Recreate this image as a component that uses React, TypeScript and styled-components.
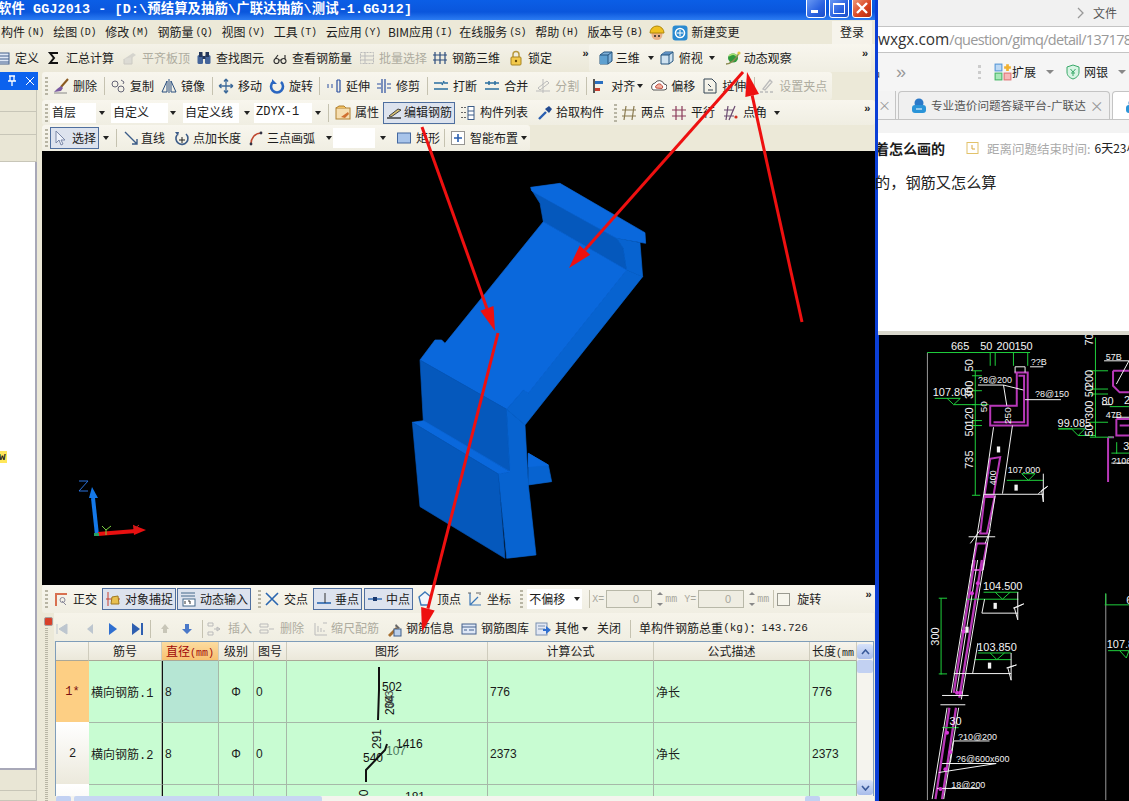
import React from "react";
import styled, { createGlobalStyle } from "styled-components";

const Global = createGlobalStyle`
  html, body { margin: 0; padding: 0; background: #000; overflow: hidden; }
  #root { width: 1129px; height: 801px; overflow: hidden; }
`;

const CJK = `"Noto Sans CJK SC", "Liberation Sans", sans-serif`;
const MONO = `"Liberation Mono", "Noto Sans CJK SC", monospace`;

const Page = styled.div`
  position: relative;
  display: flex;
  width: 1129px;
  height: 801px;
  overflow: hidden;
  font: 12px/1.2 ${CJK};
  color: #1c1c1c;
`;
const AppWindow = styled.div`
  width: 878px;
  flex: none;
  display: flex;
  flex-direction: column;
  background: #ece9d8;
  border-right: 3px solid #0b3fd6;
  box-sizing: border-box;
  overflow: hidden;
`;
const TitleBar = styled.div`
  height: 20px;
  flex: none;
  display: flex;
  align-items: center;
  justify-content: space-between;
  padding: 0 3px 0 0;
  background: linear-gradient(#0b5ee6, #0a56dc 60%, #2c7cf2);
`;
const TitleText = styled.div`
  margin-left: -2px;
  font: bold 13.33px/20px ${MONO};
  letter-spacing: 0.15px;
  color: #fff;
  white-space: pre;
`;
const WinButtons = styled.div`
  display: flex;
  gap: 3px;
  margin-top: -5px;
`;
const WinButton = styled.div<{ $close?: boolean }>`
  width: 20px;
  height: 21px;
  box-sizing: border-box;
  border: 1px solid #fff;
  border-radius: 3px;
  display: flex;
  align-items: center;
  justify-content: center;
  background: ${(p) => (p.$close ? "linear-gradient(135deg,#f0a080,#d8421e 60%,#b02a10)" : "linear-gradient(135deg,#6f9ef5,#2a62e0 60%,#1c4ec8)")};
`;
const MenuBar = styled.div`
  height: 24px;
  flex: none;
  display: flex;
  align-items: center;
  padding-top: 1px;
  box-sizing: border-box;
  background: #ece9d8;
`;
const MenuItem = styled.span<{ $ml: number }>`
  margin-left: ${(p) => p.$ml}px;
  white-space: nowrap;
  display: inline-flex;
  align-items: center;
`;
const Key = styled.span`
  font: 10px ${MONO};
  margin-left: 2px;
  letter-spacing: -0.3px;
`;
const LoginBox = styled.div`
  margin-left: auto;
  margin-right: 3px;
  width: 40px;
  height: 24px;
  background: #f6f4ec;
  display: flex;
  align-items: center;
  justify-content: center;
`;
const RowOne = styled.div`
  height: 28px;
  flex: none;
  display: flex;
  align-items: center;
  background: linear-gradient(#f4f2e8, #ebe8d8);
`;
const Body = styled.div`
  flex: 1;
  min-height: 0;
  display: flex;
`;
const SidePanel = styled.div`
  width: 42px;
  flex: none;
  display: flex;
  flex-direction: column;
  background: #ece9d8;
`;
const SideHeader = styled.div`
  width: 38px;
  height: 18px;
  flex: none;
  background: #0c62ee;
  display: flex;
  align-items: center;
  justify-content: flex-end;
  gap: 8px;
  padding-right: 3px;
  box-sizing: border-box;
`;
const SideRow = styled.div<{ $h: number }>`
  width: 37px;
  height: ${(p) => p.$h}px;
  flex: none;
  box-sizing: border-box;
  background: #e9e6d5;
  border: 1px solid #c8c6b8;
  border-width: 0 1px 1px 0;
`;
const SideList = styled.div`
  width: 37px;
  flex: 1;
  box-sizing: border-box;
  background: #fff;
  border-right: 2px solid #a8a8b8;
  border-bottom: 2px solid #a8a8b8;
  padding-top: 289px;
  overflow: hidden;
`;
const SideTag = styled.span`
  display: inline-block;
  background: #ffe75a;
  font: bold 11px/12px ${MONO};
  color: #222;
  margin-left: -1px;
  width: 8px;
  overflow: hidden;
`;
const MainColumn = styled.div`
  flex: 1;
  min-width: 0;
  display: flex;
  flex-direction: column;
`;
const ToolRow = styled.div<{ $h: number }>`
  height: ${(p) => p.$h}px;
  flex: none;
  display: flex;
  align-items: center;
  background: #ece9d8;
`;
const ToolGroup = styled.div<{ $w: number }>`
  width: ${(p) => p.$w}px;
  height: 100%;
  flex: none;
  display: flex;
  align-items: center;
  background: linear-gradient(#f8f6ee, #f0eee2);
  border-radius: 3px;
`;
const Grip = styled.i<{ $ml?: number; $h?: number }>`
  flex: none;
  margin-left: ${(p) => p.$ml ?? 3}px;
  width: 3px;
  height: ${(p) => p.$h ?? 18}px;
  background: repeating-linear-gradient(#b8b5a4 0 2px, transparent 2px 4px);
`;
const Sep = styled.i<{ $ml: number }>`
  flex: none;
  margin-left: ${(p) => p.$ml}px;
  width: 1px;
  height: 18px;
  background: #c5c2b0;
`;
const ToolItem = styled.span<{ $ml: number; $dim?: boolean; $active?: boolean; $gap?: number }>`
  flex: none;
  display: inline-flex;
  align-items: center;
  gap: ${(p) => p.$gap ?? 4}px;
  margin-left: ${(p) => p.$ml}px;
  white-space: nowrap;
  color: ${(p) => (p.$dim ? "#aeaca0" : "#1c1c1c")};
  ${(p) => (p.$active ? "height:22px;padding:0 2px;box-sizing:border-box;border:1px solid #4f6f9f;background:#dde3ee;" : "")}
`;
const Caret = styled.i<{ $ml: number }>`
  flex: none;
  position: relative;
  margin-left: ${(p) => p.$ml}px;
  width: 0;
  height: 0;
  border: 3px solid transparent;
  border-top: 4px solid #222;
  border-bottom: 0;
`;
const More = styled.span<{ $ml: number }>`
  flex: none;
  margin-left: ${(p) => p.$ml}px;
  font: bold 11px/10px ${MONO};
  color: #222;
  margin-top: -8px;
`;
const Combo = styled.span<{ $ml: number; $w: number; $mono?: boolean }>`
  flex: none;
  margin-left: ${(p) => p.$ml}px;
  width: ${(p) => p.$w}px;
  height: 20px;
  box-sizing: border-box;
  padding-left: 2px;
  background: #fff;
  display: inline-flex;
  align-items: center;
  white-space: nowrap;
  font-family: ${(p) => (p.$mono ? MONO : CJK)};
`;
const Viewport = styled.div`
  flex: 1;
  min-height: 0;
  background: #000;
`;
const FullSvg = styled.svg`
  display: block;
  width: 100%;
  height: 100%;
`;
const SmallLabel = styled.span<{ $ml: number; $c?: string }>`
  flex: none;
  margin-left: ${(p) => p.$ml}px;
  font: 10px ${MONO};
  color: ${(p) => p.$c ?? "#a8a79c"};
`;
const NumInput = styled.span<{ $ml: number }>`
  flex: none;
  margin-left: ${(p) => p.$ml}px;
  width: 46px;
  height: 18px;
  box-sizing: border-box;
  border: 1px solid #b8b8a8;
  background: #efede2;
  display: inline-flex;
  align-items: center;
  justify-content: flex-end;
  padding-right: 12px;
  font: 11px "Liberation Sans", sans-serif;
  color: #a8a79c;
`;
const Spin = styled.span`
  flex: none;
  margin-left: 4px;
  width: 7px;
  height: 14px;
  display: inline-flex;
  flex-direction: column;
  justify-content: space-between;
  align-items: center;
`;
const SpinUp = styled.i`
  border: 3px solid transparent;
  border-bottom: 3px solid #888;
  border-top: 0;
`;
const SpinDown = styled.i`
  border: 3px solid transparent;
  border-top: 3px solid #888;
  border-bottom: 0;
`;
const CheckBox = styled.span<{ $ml: number }>`
  flex: none;
  margin-left: ${(p) => p.$ml}px;
  width: 11px;
  height: 11px;
  border: 1px solid #9a9a90;
  background: #f6f5ec;
`;
const BottomPane = styled.div`
  flex: none;
  height: 188px;
  display: flex;
  background: #ece9d8;
`;
const PaneGrip = styled.div`
  width: 12px;
  flex: none;
  display: flex;
  flex-direction: column;
  align-items: center;
  padding-top: 3px;
  gap: 2px;
`;
const CloseDot = styled.span`
  width: 9px;
  height: 9px;
  margin-top: 1px;
  border-radius: 2px;
  background: #d8402a;
  border: 1px solid #a8a0a0;
  box-sizing: border-box;
`;
const GripLine = styled.i`
  flex: 1;
  width: 3px;
  margin-left: -4px;
  background: repeating-linear-gradient(#b8b5a4 0 1px, transparent 1px 2px);
`;
const PaneMain = styled.div`
  flex: 1;
  min-width: 0;
  display: flex;
  flex-direction: column;
  padding-right: 1px;
`;
const PaneBar = styled.div`
  height: 28px;
  flex: none;
  box-sizing: border-box;
  padding-top: 3px;
  display: flex;
  align-items: center;
  background: linear-gradient(#f6f4ea, #f0eee2);
`;
const WeightText = styled.span<{ $ml: number }>`
  flex: none;
  margin-left: ${(p) => p.$ml}px;
  white-space: nowrap;
  display: inline-flex;
  align-items: center;
`;
const WeightNum = styled.span`
  font: 11px ${MONO};
`;
const TableFrame = styled.div`
  flex: 1;
  min-height: 0;
  display: flex;
  border: 1px solid #7f9db9;
  border-bottom: 0;
  margin: 0 0 0 1px;
  background: #fff;
`;
const TableClip = styled.div`
  flex: 1;
  min-width: 0;
  overflow: hidden;
  background: #f8f7f0;
`;
const Grid = styled.table`
  table-layout: fixed;
  border-collapse: separate;
  border-spacing: 0;
  width: 801px;
`;
const Th = styled.th<{ $hot?: boolean }>`
  height: 19px;
  padding: 0;
  box-sizing: border-box;
  font-weight: 400;
  font-size: 12px;
  white-space: nowrap;
  overflow: hidden;
  color: ${(p) => (p.$hot ? "#a00808" : "#1c1c1c")};
  background: ${(p) => (p.$hot ? "linear-gradient(#fcdca0,#f8c070)" : "linear-gradient(#f6f4ec,#ebe8da)")};
  border-right: 1px solid #cfccbd;
  border-bottom: 1px solid #aaa898;
`;
const ThKey = styled.span`
  font: 10px ${MONO};
`;
const RowHead = styled.td<{ $hot?: boolean }>`
  height: 61px;
  padding: 0;
  box-sizing: border-box;
  text-align: center;
  font: 12px ${MONO};
  color: ${(p) => (p.$hot ? "#7a1010" : "#1c1c1c")};
  background: ${(p) => (p.$hot ? "#fdcf84" : "linear-gradient(#fff,#ece9dc)")};
  border-bottom: 1px solid #fff;
`;
const Td = styled.td<{ $center?: boolean; $sel?: boolean; $mono?: boolean; $rule?: boolean }>`
  height: 61px;
  padding: 0 2px;
  box-sizing: border-box;
  overflow: hidden;
  white-space: nowrap;
  text-align: ${(p) => (p.$center ? "center" : "left")};
  font: 12px ${(p) => (p.$mono ? MONO : `"Liberation Sans", "Noto Sans CJK SC", sans-serif`)};
  background: ${(p) => (p.$sel ? "#b6e6d4" : "#c8fcd2")};
  border-right: 1px solid #a6b8a8;
  border-bottom: 1px solid #a6b8a8;
  ${(p) => (p.$rule ? "border-left:1px solid #111;" : "")}
`;
const ShapeCell = styled.td`
  height: 61px;
  padding: 0;
  background: #c8fcd2;
  border-right: 1px solid #a6b8a8;
  border-bottom: 1px solid #a6b8a8;
  overflow: hidden;
`;
const ShapeSvg = styled.svg`
  display: block;
  width: 201px;
  height: 60px;
  overflow: visible;
`;
const VScroll = styled.div`
  width: 16px;
  flex: none;
  display: flex;
  flex-direction: column;
  background: #f5f4ee;
  padding: 2px 0 1px;
  box-sizing: border-box;
`;
const ScrollBtn = styled.div`
  height: 15px;
  flex: none;
  border-radius: 3px;
  background: linear-gradient(#d6e2fa, #a9bcea);
  display: flex;
  align-items: center;
  justify-content: center;
`;
const ScrollThumb = styled.div`
  height: 13px;
  flex: none;
  margin-top: 1px;
  border-radius: 2px;
  background: #c2d1f2;
`;
const ScrollFill = styled.div`
  flex: 1;
`;
const HScroll = styled.div`
  height: 5px;
  flex: none;
  display: flex;
  margin-left: 2px;
  background: #f5f4ee;
`;
const HBtn = styled.div<{ $ml?: number }>`
  width: 15px;
  flex: none;
  margin-left: ${(p) => p.$ml ?? 0}px;
  border-radius: 2px 2px 0 0;
  background: #c2d1f2;
`;
const HThumb = styled.div`
  width: 248px;
  flex: none;
  margin-left: 3px;
  background: #c8d6f2;
  border-radius: 2px 2px 0 0;
`;
const Browser = styled.div`
  flex: 1;
  min-width: 0;
  display: flex;
  flex-direction: column;
`;
const BrowserTop = styled.div`
  height: 26px;
  flex: none;
  box-sizing: border-box;
  background: #f1f1f1;
  display: flex;
  align-items: center;
  color: #555;
  padding-left: 199px;
  gap: 8px;
`;
const Address = styled.div`
  height: 27px;
  flex: none;
  box-sizing: border-box;
  background: #fff;
  border-top: 1px solid #c4c4c4;
  border-bottom: 1px solid #c4c4c4;
  font: 15.4px/25px "Open Sans", sans-serif;
  color: #999;
  white-space: nowrap;
  overflow: hidden;
`;
const AddressHost = styled.span`
  color: #333;
`;
const AddressPath = styled.span`
  font-size: 14.5px;
  letter-spacing: -0.7px;
`;
const Bookmarks = styled.div`
  height: 38px;
  flex: none;
  box-sizing: border-box;
  background: #f5f5f5;
  display: flex;
  align-items: center;
  overflow: hidden;
  color: #444;
`;
const BookText = styled.span<{ $ml?: number }>`
  flex: none;
  margin-left: ${(p) => p.$ml ?? 0}px;
  white-space: nowrap;
`;
const BookMore = styled.span<{ $ml: number }>`
  flex: none;
  width: 14px;
  margin-left: ${(p) => p.$ml}px;
  font: 18px/18px "Liberation Sans", sans-serif;
  color: #999;
`;
const BookDots = styled.i<{ $ml: number }>`
  flex: none;
  margin-left: ${(p) => p.$ml}px;
  width: 3px;
  height: 14px;
  background: repeating-linear-gradient(#ccc 0 3px, transparent 3px 6px);
`;
const TabCaret = styled.i<{ $ml: number }>`
  flex: none;
  margin-left: ${(p) => p.$ml}px;
  border: 4px solid transparent;
  border-top: 4px solid #888;
  border-bottom: 0;
`;
const Tabs = styled.div`
  height: 29px;
  flex: none;
  display: flex;
  gap: 2px;
  background: #f3f3f3;
  border-bottom: 1px solid #c4c4c4;
  box-sizing: border-box;
  overflow: hidden;
`;
const Tab = styled.div<{ $w: number; $on?: boolean }>`
  width: ${(p) => p.$w}px;
  flex: none;
  box-sizing: border-box;
  display: flex;
  align-items: center;
  gap: 4px;
  padding-left: 12px;
  color: #555;
  white-space: nowrap;
  overflow: hidden;
  background: ${(p) => (p.$on ? "#fff" : "#f0f0f0")};
  border: 1px solid #c4c4c4;
  border-bottom: 0;
  border-radius: 4px 4px 0 0;
`;
const TabEnd = styled.div`
  width: 18px;
  flex: none;
  box-sizing: border-box;
  display: flex;
  align-items: center;
  color: #999;
  border-right: 1px solid #c4c4c4;
  font-size: 13px;
`;
const TabLabel = styled.span`
  flex: none;
  font-size: 11.6px;
`;
const TabClose = styled.span`
  color: #999;
  font-size: 14px;
`;
const Strip = styled.div`
  height: 13px;
  flex: none;
  background: #f3f3f3;
`;
const Content = styled.div`
  flex: 1;
  min-height: 0;
  background: #fff;
  border-bottom: 4px solid #d9d7cc;
`;
const QuestionHead = styled.div`
  display: flex;
  align-items: center;
  height: 34px;
  padding-bottom: 4px;
  box-sizing: border-box;
  white-space: nowrap;
  overflow: hidden;
`;
const QuestionTitle = styled.b`
  flex: none;
  margin-left: -3px;
  font-size: 14px;
  width: 90px;
`;
const Countdown = styled.span`
  flex: none;
  margin-left: 6px;
  font-size: 12.5px;
  color: #aaa;
`;
const CountdownValue = styled.span`
  flex: none;
  margin-left: 4px;
  color: #222;
  font-size: 12px;
`;
const QuestionBody = styled.div`
  margin: -1px 0 0 -3px;
  font-size: 15.2px;
  line-height: 30px;
  white-space: nowrap;
  color: #222;
`;
const Drawing = styled.div`
  height: 466px;
  flex: none;
  background: #000;
  border-left: 1px solid #0b3fd6;
  box-sizing: border-box;
`;
const Overlay = styled.svg`
  position: absolute;
  left: 0;
  top: 0;
  width: 1129px;
  height: 801px;
  pointer-events: none;
`;
const IconSvg = styled.svg`
  flex: none;
  display: block;
`;

const icons: Record<string, React.ReactNode> = {
  def: <><rect x="1" y="3" width="14" height="11" fill="#dfe8f6" stroke="#44608c" /><path d="M1 6h14M5 6v8M5 9h10M5 12h10" stroke="#44608c" /></>,
  sigma: <path d="M12 3H4l4 5-4 5h8" stroke="#111" strokeWidth="2" />,
  level: <g opacity=".5"><path d="M2 9l9-6 3 2-9 6z" fill="#bbb" /><path d="M2 9v5h8V7" fill="#ccc" stroke="#aaa" /></g>,
  binoc: <><rect x="1.5" y="5" width="5.5" height="9" rx="1.5" fill="#45659a" /><rect x="9" y="5" width="5.5" height="9" rx="1.5" fill="#45659a" /><rect x="3" y="2" width="3.5" height="5" fill="#23365a" /><rect x="9.5" y="2" width="3.5" height="5" fill="#23365a" /><rect x="6.5" y="6" width="3" height="3" fill="#23365a" /></>,
  glasses: <path d="M2 11a2.5 2.5 0 105 0 2.5 2.5 0 10-5 0zM9 11a2.5 2.5 0 105 0 2.5 2.5 0 10-5 0zM7 10h2M3 9l3-4M13 9V5" stroke="#333" strokeWidth="1.2" />,
  batch: <g stroke="#bbb"><rect x="1.5" y="2.5" width="13" height="11" strokeDasharray="2 1" /><path d="M1 6h14M1 10h14M6 2v12" /></g>,
  rebar3d: <path d="M3 2v12M8 2v12M13 2v12M1 5h14M1 10h14" stroke="#2c4c7c" strokeWidth="1.2" />,
  lock: <><path d="M5 7V4.5a3 3 0 016 0V7" stroke="#b89a40" strokeWidth="1.5" /><rect x="3" y="7" width="10" height="8" rx="1" fill="#f2c94c" stroke="#a88420" /><circle cx="8" cy="11" r="1.2" fill="#6a4c08" /></>,
  cube: <><path d="M2 5l4-3h8v9l-4 3H2z" fill="#7fb0d8" stroke="#25557f" /><path d="M2 5h8v9H2z" fill="#5ea0d0" /><path d="M2 5h8v9M10 5l4-3" stroke="#25557f" /></>,
  cubeTop: <><path d="M2 5l4-3h8v9l-4 3H2z" fill="#cfe2f0" stroke="#25557f" /><path d="M2 5l4-3h8l-4 3z" fill="#5e8fc0" /><path d="M2 5h8v9M10 5l4-3" stroke="#25557f" /></>,
  orbit: <><ellipse cx="8" cy="8" rx="5" ry="4.5" fill="#2f9a3c" /><path d="M4 6c3-3 7-2 8 1" stroke="#a6e070" strokeWidth="1.5" /><path d="M1 14c4 0 10-4 13-11" stroke="#8a8a50" strokeWidth="1.4" /><circle cx="14" cy="3" r="1.6" fill="#e2c640" /></>,
  brush: <><path d="M15 1L8 9" stroke="#8a5a20" strokeWidth="2" /><path d="M8 8l-4 3-3 3 7-1 2-3z" fill="#7a5aa0" /><path d="M1 15h13" stroke="#888" /></>,
  copy: <><circle cx="5" cy="6" r="3" stroke="#667" /><circle cx="11" cy="11" r="3" stroke="#667" /><path d="M11 2l3 2M13 6l1-2" stroke="#667" /></>,
  mirror: <path d="M8 1v14M6 3L1 14h5zM10 3l5 11h-5z" stroke="#2a4f7f" />,
  move: <path d="M8 1v14M1 8h14M8 1L6 3.5M8 1l2 2.5M8 15l-2-2.5M8 15l2-2.5M1 8l2.5-2M1 8l2.5 2M15 8l-2.5-2M15 8l-2.5 2" stroke="#3d6a9a" strokeWidth="1.3" />,
  rotate: <><path d="M4 4a6 6 0 108 0" stroke="#2a66c0" strokeWidth="2.6" /><path d="M3 1v5h5" fill="#2a66c0" /></>,
  extend: <path d="M1 7h2M5 7h2M1 9h2M5 9h2M11 2v12M14 2v12M11 2h3M11 14h3" stroke="#2a4f9f" strokeWidth="1.2" />,
  trim: <path d="M1 6h4M1 10h4M11 6h4M11 10h4M6 1v14M9 1v14" stroke="#2a4f9f" strokeWidth="1.2" />,
  breakIco: <path d="M1 5h8M11 5h4M1 11h14M11 3l-2 4" stroke="#2a6fa0" strokeWidth="1.5" />,
  merge: <path d="M1 5h14M1 11h14M5 3v4M11 3v4" stroke="#2a6fa0" strokeWidth="1.5" />,
  split: <path d="M1 13h14M3 10l9-7 2 2-9 7zM8 1v14" stroke="#bbb" />,
  align: <><path d="M3 1v14" stroke="#222" strokeWidth="1.5" /><rect x="4" y="3" width="8" height="3" fill="#2a6fc0" /><rect x="4" y="10" width="5" height="3" fill="#c84030" /></>,
  offset: <><path d="M2 12a4 4 0 012-7 5 5 0 019 1 3 3 0 010 6z" fill="#fff" stroke="#555" /><path d="M5 10a2 2 0 011-3 3 3 0 015 .5 2 2 0 010 3z" fill="#f4b0a0" stroke="#c05040" /></>,
  stretch: <path d="M2 15V1h8l4 4v10zM6 6l3 3M6 12h5" stroke="#345" />,
  setpt: <path d="M1 14h3M6 14h3M4 11l7-9 2 2-7 8zM11 14h3" stroke="#bbb" strokeWidth="1.3" />,
  prop: <><rect x="1" y="3" width="14" height="11" fill="#f6deb0" stroke="#b08030" /><path d="M1 3l3-2h5l2 2" fill="#f2c060" stroke="#b08030" /><path d="M6 12l7-5 1 2-4 4z" fill="#d07030" /></>,
  edit: <><path d="M1 13h14" stroke="#333" strokeWidth="1.4" /><path d="M3 11l9-7 3 1-10 7z" fill="#d8c070" stroke="#444" /></>,
  list: <><path d="M2 2v1M2 7v1M2 12v1M5 2v1M5 7v1M5 12v1" stroke="#666" strokeWidth="2" /><rect x="8" y="1.5" width="6" height="13" fill="#fff" stroke="#3c5c88" /><path d="M8 6h6M8 10h6" stroke="#3c5c88" /></>,
  pick: <><path d="M2 14l7-7" stroke="#2a5fb0" strokeWidth="2.4" /><path d="M8 4l4 4 3-4-3-3z" fill="#234a90" /></>,
  twoPt: <path d="M1 5h14M1 11h14M5 1l-2 14M13 1l-2 14" stroke="#8a7a50" strokeWidth="1.2" />,
  parallel: <path d="M1 5h14M1 11h14M5 1v14M11 1v14" stroke="#8a3a5a" strokeWidth="1.2" />,
  angle: <><path d="M1 5h10M1 11h10M5 1l-2 14M12 1L6 15" stroke="#6a4a70" strokeWidth="1.2" /><circle cx="13" cy="12" r="1.6" fill="#d03020" /></>,
  cursor: <path d="M3 1v12l3-3 2 5 2-1-2-4h4z" fill="#eef2fa" stroke="#7a88a8" />,
  line: <path d="M2 2l12 12M9 14h5V9" stroke="#3c5c88" strokeWidth="1.4" />,
  ptLen: <><path d="M3 5a6 6 0 109-1" stroke="#3c5c88" strokeWidth="1.6" /><path d="M8 7v6M5 10h6" stroke="#222" /><path d="M1 2l4 0-1 4z" fill="#3c5c88" /></>,
  arc: <><path d="M3 14C3 8 7 3 13 3" stroke="#c04830" strokeWidth="1.6" /><circle cx="3" cy="14" r="1.4" fill="#334" /><circle cx="13" cy="3" r="1.4" fill="#334" /></>,
  rect: <rect x="1.5" y="3" width="13" height="10" fill="#a8c4ea" stroke="#4468a0" />,
  smart: <><rect x="1.5" y="1.5" width="13" height="13" fill="#fff" stroke="#333" strokeDasharray="1 1" /><path d="M8 4v8M4 8h8" stroke="#2a5fb0" strokeWidth="1.6" /></>,
  ortho: <><path d="M2 3h12M3 3v12" stroke="#d87050" strokeWidth="2" /><path d="M9 10l4 4M7 9a2.5 2.5 0 105 0 2.5 2.5 0 10-5 0" stroke="#889" /></>,
  snap: <><path d="M3 1v14M1 8h14" stroke="#c84030" /><path d="M6 13l1-7 6-1 1 8z" fill="#e8c050" stroke="#a07820" /></>,
  dyn: <><path d="M1 2h14M1 5h14" stroke="#44688a" /><rect x="3" y="8" width="12" height="7" fill="#fff" stroke="#44688a" /><path d="M5 10v3M8 10h2v3" stroke="#333" /></>,
  cross: <path d="M2 2l12 12M14 2L2 14" stroke="#2a66b0" strokeWidth="1.6" />,
  perp: <><path d="M1 12h14" stroke="#2a66b0" strokeWidth="1.6" /><path d="M9 2v10" stroke="#333" /></>,
  mid: <><path d="M1 8h14" stroke="#2a66b0" strokeWidth="1.4" /><rect x="6" y="6" width="4" height="4" fill="#1a3a70" /></>,
  vertex: <path d="M8 1l6 5-2 8H4L2 6z" fill="#f2f6fb" stroke="#3c78b8" strokeWidth="1.4" />,
  coord: <><path d="M3 2v12h11M3 14l8-8" stroke="#3c78b8" strokeWidth="1.2" /><path d="M1 2h3M9 2h3M13 1v3" stroke="#666" /></>,
  first: <path d="M3 3v10M13 3v10L5 8z" fill="#bdc6cf" stroke="#bdc6cf" />,
  prev: <path d="M11 3v10L5 8z" fill="#bdc6cf" />,
  next: <path d="M5 2v12l8-6z" fill="#2f6fd0" />,
  last: <path d="M3 2v12l8-6zM12 2h2v12h-2z" fill="#2f5fb0" />,
  up: <path d="M8 3l4 5H10v4H6V8H4z" fill="#c8c6b8" />,
  down: <path d="M6 3h4v5h3l-5 5-5-5h3z" fill="#4a78c8" />,
  insert: <path d="M1 2h5v3H1zM1 11h5v3H1zM7 8h6M13 8l-3-2v4z" stroke="#bbb" />,
  del: <path d="M1 3h8v3H1zM1 9h8v3H1zM10 8h5" stroke="#bbb" />,
  scale: <path d="M2 2v12h12M5 11V5M8 11V7M11 11V9M10 2h4" stroke="#bbb" />,
  info: <><path d="M2 14l8-8 2 2-8 8z" fill="#a87030" /><rect x="8" y="8" width="7" height="7" fill="#bcd0ea" stroke="#3c5c88" /><path d="M10 3l4 4-2 1-3-3z" fill="#666" /></>,
  lib: <><rect x="1" y="3" width="14" height="10" fill="#dfe8f6" stroke="#44608c" /><path d="M1 6h14M3 9h3M8 9h5" stroke="#44608c" /></>,
  other: <><rect x="1" y="2" width="11" height="12" fill="#e2e8f4" stroke="#7a90b0" /><path d="M3 5h7M3 8h7" stroke="#7a90b0" /><path d="M8 8h3V5l5 4-5 4v-3H8z" fill="#2f6fd0" /></>,
  helmet: <><circle cx="8" cy="9.5" r="5.5" fill="#e8b088" /><path d="M1 8a7 7 0 0114 0z" fill="#f0c020" stroke="#b08808" /><circle cx="6" cy="11" r="1" fill="#222" /><circle cx="10" cy="11" r="1" fill="#222" /></>,
  service: <><rect x="0.5" y="0.5" width="15" height="15" rx="3" fill="#2a8ad0" /><circle cx="8" cy="8" r="4.5" fill="none" stroke="#fff" strokeWidth="1.6" /><path d="M5 8h6M8 5v6" stroke="#fff" /></>,
  ext: <><rect x="1" y="1" width="6" height="6" fill="#bcd8f4" stroke="#5a9ad8" /><rect x="1" y="9" width="6" height="6" fill="#a8e8b8" stroke="#48b868" /><rect x="9" y="9" width="6" height="6" fill="#f8b8b8" stroke="#e07878" /><path d="M12 1v6M9 4h6" stroke="#f0b030" strokeWidth="2.4" /></>,
  shield: <><path d="M8 1l6 2v5c0 4-3 6-6 7-3-1-6-3-6-7V3z" fill="#d8f4e4" stroke="#38a868" /><path d="M5.5 5L8 8l2.5-3M8 8v4M6 9h4" stroke="#38a868" /></>,
  tabIco: <><circle cx="8" cy="5" r="4.5" fill="#2a78c8" /><rect x="1" y="7" width="14" height="8" rx="3" fill="#2a94d8" /><path d="M5 11h6" stroke="#fff" /></>,
  clock: <><rect x="2" y="2.5" width="11" height="11" fill="#fff" stroke="#e2c26a" /><path d="M7 5v4h3" stroke="#d8a840" /></>,
};
const Ico = ({ n, size = 16 }: { n: string; size?: number }) => (
  <IconSvg width={size} height={size} viewBox="0 0 16 16" fill="none">{icons[n]}</IconSvg>
);
const T = ({ i, l, ml = 0, dim, active, gap }: { i?: string; l?: string; ml?: number; dim?: boolean; active?: boolean; gap?: number }) => (
  <ToolItem $ml={ml} $dim={dim} $active={active} $gap={gap}>
    {i && <Ico n={i} />}
    {l && <span>{l}</span>}
  </ToolItem>
);

const menus: [string, string, number][] = [
  ["构件", "(N)", 1], ["绘图", "(D)", 9], ["修改", "(M)", 9], ["钢筋量", "(Q)", 9], ["视图", "(V)", 9],
  ["工具", "(T)", 9], ["云应用", "(Y)", 9], ["BIM应用", "(I)", 7], ["在线服务", "(S)", 7], ["帮助", "(H)", 9], ["版本号", "(B)", 9],
];

const headers = ["", "筋号", "直径", "级别", "图号", "图形", "计算公式", "公式描述", "长度"];
const colWidths = [33, 73, 57, 35, 33, 201, 166, 156, 47];

const Vert = ({ x, y, t, fill = "#111", size = 12 }: { x: number; y: number; t: string; fill?: string; size?: number }) => (
  <text x={x} y={y} fill={fill} fontSize={size} fontFamily="Liberation Sans" transform={`rotate(-90 ${x} ${y})`}>{t}</text>
);
const Txt = ({ x, y, t, fill = "#111", size = 12 }: { x: number; y: number; t: string; fill?: string; size?: number }) => (
  <text x={x} y={y} fill={fill} fontSize={size} fontFamily="Liberation Sans">{t}</text>
);

const Face = ({ d, c }: { d: string; c: string }) => <path d={d} fill={c} stroke={c} strokeWidth="2" />;
const LIGHT = "#0a68dc";
const MIDB = "#0763d0";
const DARK = "#0558bc";
const Model = () => (
  <g transform="translate(358 19) scale(.3333)">
    <Face d="M395 60L420 100 430 155 680 300 670 235 650 205 425 80z" c={DARK} />
    <Face d="M392 52L480 40 735 188 737 220 650 205 425 80 395 62z" c={LIGHT} />
    <Face d="M650 205L720 218 728 320 680 300 670 235z" c={MIDB} />
    <Face d="M680 300L728 320 375 765 320 718 370 660 385 670z" c={MIDB} />
    <Face d="M430 155L680 300 385 670 370 660 320 718 60 570 105 510 125 510 135 520z" c={LIGHT} />
    <Face d="M60 570L320 718 330 905 70 755z" c={DARK} />
    <Face d="M320 718L375 765 385 945 408 1155 320 1165 295 912 330 905z" c={MIDB} />
    <Face d="M385 850L445 885 455 935 385 945z" c={MIDB} />
    <Face d="M385 850L445 885 385 890z" c={LIGHT} />
    <Face d="M37 757L70 752 330 905 295 912z" c={LIGHT} />
    <Face d="M37 757L295 912 315 1165 60 1010z" c={DARK} />
  </g>
);
const Axis = () => (
  <g transform="translate(-42 -151)">
    <path d="M79 481h9l-9 10h9" stroke="#2a70d8" fill="none" strokeWidth="1" />
    <path d="M97 535l-4-37" stroke="#1478e8" strokeWidth="4" />
    <path d="M89 498l3-11 6 11z" fill="#1478e8" />
    <path d="M98 534l38-3" stroke="#e81010" strokeWidth="4" />
    <path d="M133 525l13 5-12 5z" fill="#e81010" />
    <path d="M102 526l4 4 5-4M106 530v5" stroke="#7ad040" fill="none" />
    <rect x="94" y="533" width="5" height="3" fill="#2aa060" />
    <path d="M133 525l6 5M139 525l-6 5" stroke="#c02020" />
  </g>
);

const G = "#1fd13c";
const W = "#f4f4f4";
const M = "#b838b8";
const Cad = () => {
  const green = [
    "M145 65H455", "M335 65V105", "M350 65V105", "M405 65V105", "M448 65V105", "M290 120V495", "M280 120H310", "M280 135H310", "M280 180H310", "M280 222H330", "M280 270H310", "M280 285H310",
    "M280 495H305", "M168 203H245L225 222 205 203", "M225 222H290", "M652 20V320", "M635 120H690", "M635 175H690", "M635 190H690", "M635 275H690", "M635 320H705",
    "M540 295H620L600 315 580 295H540", "M600 315H652", "M470 430L450 450 430 430z", "M385 450H495", "M716 335V370", "M700 368H753", "M695 228H753",
  ];
  const white = [
    "M298 163H375L385 225", "M375 163L435 178", "M440 207H548", "M455 108H495", "M410 125V108H440V125", "M345 290L316 490", "M402 285L372 490", "M316 492H495", "M495 430V515L490 480 508 468 480 490",
    "M316 490L278 720", "M350 495L314 720", "M678 90H753L715 160", "M270 620H350M275 640L305 600M320 640L335 600", "M700 398H753", "M705 260H753", "M672 222H700",
  ];
  const magenta = [
    "M408 125H448V285H335V225H415V125z", "M420 135H437V275H345", "M335 385L365 380 345 495 318 495z", "M318 500L348 500 325 610 305 610z", "M295 640L325 640 310 720 280 720z",
    "M705 120H753M705 120V165L725 185H753", "M715 265H753M715 265V315H753M725 285H753", "M690 320V455M690 320H708",
  ];
  const green2 = [
    "M315 97H420", "M350 97L372 118 395 97", "M262 118H420", "M187 115V345M180 115H205M180 343H205", "M298 280H398", "M335 280L355 300 378 280", "M288 300H398", "M190 505H240", "M680 135H753", "M690 273H753L745 295 725 273", "M683 100V135",
  ];
  const white2 = [
    "M318 118L310 160H418", "M418 97V180L408 145 436 132 404 145", "M298 250L282 342", "M225 342H398", "M398 280V362L388 325 414 316 384 325", "M283 0L218 400", "M297 0L233 400", "M318 0L248 420", "M205 445L160 720", "M240 445L195 720",
    "M190 408H270M185 436H260", "M225 545H333", "M190 613H353L180 640", "M175 688H303", "M225 545L215 610",
  ];
  const magenta2 = ["M288 0L225 400", "M310 0L242 415", "M212 445L170 720", "M232 445L190 720"];
  const dots: [number, number][] = [[298, 70], [280, 100], [255, 215], [235, 400], [205, 520], [215, 578], [200, 630], [185, 690], [245, 400]];
  return (
    <FullSvg viewBox="878 335 251 466">
      <path d="M926.6 352V801M1105.7 594V801" stroke="#9a9a9a" />
      <g transform="translate(878 330) scale(.3333)" fill="none" strokeWidth="3">
        {magenta.map((d) => <path key={d} d={d} stroke={M} strokeWidth="6" />)}
        {green.map((d) => <path key={d} d={d} stroke={G} />)}
        {white.map((d) => <path key={d} d={d} stroke={W} />)}
        {[[360, 357], [413, 472]].map(([x, y]) => <rect key={x} x={x - 5} y={y - 9} width="10" height="18" fill={W} />)}
      </g>
      <g transform="translate(878 560) scale(.3333)" fill="none" strokeWidth="3">
        {magenta2.map((d) => <path key={d} d={d} stroke={M} strokeWidth="7" />)}
        {green2.map((d) => <path key={d} d={d} stroke={G} />)}
        {white2.map((d) => <path key={d} d={d} stroke={W} />)}
        {dots.map(([x, y]) => <circle key={`${x}${y}`} cx={x} cy={y} r="6" fill="#d838d8" />)}
        {[[350, 138], [265, 210], [333, 318]].map(([x, y]) => <rect key={x} x={x - 5} y={y - 9} width="10" height="18" fill={W} />)}
      </g>
      <g transform="translate(878 330) scale(.3333)">
        <Txt x={217} y={58} t="665" fill={W} size={33} />
        <Txt x={305} y={58} t="50" fill={W} size={33} />
        <Txt x={354} y={58} t="200" fill={W} size={33} />
        <Txt x={408} y={58} t="150" fill={W} size={33} />
        <Txt x={457} y={104} t="??B" fill={W} size={27} />
        <Txt x={298} y={157} t="?8@200" fill={W} size={27} />
        <Txt x={470} y={200} t="?8@150" fill={W} size={27} />
        <Txt x={162} y={195} t="107.805" fill={W} size={33} />
        <Txt x={388} y={427} t="107.000" fill={W} size={27} />
        <Txt x={538} y={290} t="99.085" fill={W} size={33} />
        <Txt x={683} y={88} t="57B" fill={W} size={27} />
        <Txt x={683} y={262} t="47B" fill={W} size={27} />
        <Txt x={670} y={222} t="80" fill={W} size={33} />
        <Txt x={738} y={220} t="2" fill={W} size={33} />
        <Txt x={736} y={358} t="3" fill={W} size={33} />
        <Txt x={700} y={400} t="?106" fill={W} size={27} />
        <Vert x={282} y={122} t="50" fill={W} size={33} />
        <Vert x={282} y={205} t="300" fill={W} size={33} />
        <Vert x={326} y={245} t="50" fill={W} size={30} />
        <Vert x={282} y={285} t="120" fill={W} size={33} />
        <Vert x={282} y={318} t="50" fill={W} size={33} />
        <Vert x={282} y={415} t="735" fill={W} size={33} />
        <Vert x={398} y={280} t="250" fill={W} size={30} />
        <Vert x={352} y={465} t="400" fill={W} size={27} />
        <Vert x={646} y={44} t="70" fill={W} size={33} />
        <Vert x={646} y={172} t="200" fill={W} size={33} />
        <Vert x={646} y={200} t="50" fill={W} size={33} />
        <Vert x={646} y={265} t="300" fill={W} size={33} />
        <Vert x={646} y={318} t="50" fill={W} size={33} />
      </g>
      <g transform="translate(878 560) scale(.3333)">
        <Txt x={313} y={90} t="104.500" fill={W} size={33} />
        <Txt x={296} y={274} t="103.850" fill={W} size={33} />
        <Vert x={182} y={258} t="300" fill={W} size={33} />
        <Txt x={212} y={498} t="30" fill={W} size={33} />
        <Txt x={238} y={543} t="?10@200" fill={W} size={27} />
        <Txt x={232} y={607} t="?6@600x600" fill={W} size={27} />
        <Txt x={218} y={686} t="18@200" fill={W} size={27} />
        <Txt x={745} y={132} t="6" fill={W} size={33} />
        <Txt x={686} y={266} t="107.8" fill={W} size={33} />
      </g>
    </FullSvg>
  );
};

const Arrow = ({ x1, y1, x2, y2 }: { x1: number; y1: number; x2: number; y2: number }) => {
  const a = Math.atan2(y2 - y1, x2 - x1);
  const L = 24, H = 7;
  const bx = x2 - L * Math.cos(a), by = y2 - L * Math.sin(a);
  const nx = -Math.sin(a) * H, ny = Math.cos(a) * H;
  return (
    <g fill="#ee1010">
      <path d={`M${x1} ${y1}L${bx} ${by}`} stroke="#ee1010" strokeWidth="3" />
      <path d={`M${x2} ${y2}L${bx + nx} ${by + ny}L${bx - nx} ${by - ny}z`} />
    </g>
  );
};

export default function App() {
  return (
    <Page>
      <Global />
      <AppWindow>
        <TitleBar>
          <TitleText>软件 GGJ2013 - [D:\预结算及抽筋\广联达抽筋\测试-1.GGJ12]</TitleText>
          <WinButtons>
            <WinButton><svg width="12" height="12"><rect x="1" y="8" width="7" height="3" fill="#fff" /></svg></WinButton>
            <WinButton><svg width="14" height="14"><rect x="1.5" y="2.5" width="11" height="10" fill="none" stroke="#fff" /><path d="M1 3h12" stroke="#fff" strokeWidth="2" /></svg></WinButton>
            <WinButton $close><svg width="14" height="14"><path d="M2 2l10 10M12 2L2 12" stroke="#fff" strokeWidth="2.4" /></svg></WinButton>
          </WinButtons>
        </TitleBar>
        <MenuBar>
          {menus.map(([a, k, ml]) => <MenuItem key={a} $ml={ml}>{a}<Key>{k}</Key></MenuItem>)}
          <ToolItem $ml={6}><Ico n="helmet" /></ToolItem>
          <ToolItem $ml={7}><Ico n="service" /></ToolItem>
          <MenuItem $ml={4}>新建变更</MenuItem>
          <LoginBox>登录</LoginBox>
        </MenuBar>
        <RowOne>
          <T i="def" l="定义" ml={-6} gap={5} />
          <T i="sigma" l="汇总计算" ml={7} />
          <T i="level" l="平齐板顶" ml={8} dim />
          <T i="binoc" l="查找图元" ml={6} />
          <T i="glasses" l="查看钢筋量" ml={8} />
          <T i="batch" l="批量选择" ml={7} dim />
          <T i="rebar3d" l="钢筋三维" ml={5} />
          <T i="lock" l="锁定" ml={8} />
          <More $ml={30}>»</More>
          <ToolGroup $w={282}>
            <T i="cube" l="三维" ml={9} gap={2} />
            <Caret $ml={8} />
            <T i="cubeTop" l="俯视" ml={5} />
            <Caret $ml={6} />
            <T i="orbit" l="动态观察" ml={10} gap={3} />
            <More $ml={70}>»</More>
          </ToolGroup>
        </RowOne>
        <Body>
          <SidePanel>
            <SideHeader>
              <svg width="10" height="12"><path d="M2 1h6M3 1v5M7 1v5M1 6h8M5 6v5" stroke="#fff" strokeWidth="1.3" /></svg>
              <svg width="10" height="10"><path d="M1 1l8 8M9 1L1 9" stroke="#fff" /></svg>
            </SideHeader>
            <SideRow $h={22} />
            <SideRow $h={23} />
            <SideRow $h={27} />
            <SideList><SideTag>w</SideTag></SideList>
            <SideRow $h={21} />
            <SideRow $h={10} />
          </SidePanel>
          <MainColumn>
            <ToolRow $h={28}>
              <ToolGroup $w={790}>
                <Grip />
                <T i="brush" l="删除" ml={5} />
                <Sep $ml={7} />
                <T i="copy" l="复制" ml={5} />
                <T i="mirror" l="镜像" ml={7} />
                <Sep $ml={7} />
                <T i="move" l="移动" ml={5} />
                <T i="rotate" l="旋转" ml={7} />
                <Sep $ml={6} />
                <T i="extend" l="延伸" ml={6} />
                <T i="trim" l="修剪" ml={6} />
                <Sep $ml={7} />
                <T i="breakIco" l="打断" ml={5} />
                <T i="merge" l="合并" ml={7} />
                <T i="split" l="分割" ml={7} dim />
                <Sep $ml={7} />
                <T i="align" l="对齐" ml={4} />
                <Caret $ml={2} />
                <T i="offset" l="偏移" ml={8} />
                <T i="stretch" l="拉伸" ml={7} />
                <Sep $ml={8} />
                <T i="setpt" l="设置夹点" ml={4} dim />
              </ToolGroup>
            </ToolRow>
            <ToolRow $h={25}>
              <ToolGroup $w={833}>
                <Grip />
                <Combo $ml={2} $w={46}>首层</Combo>
                <Caret $ml={3} />
                <Combo $ml={6} $w={57}>自定义</Combo>
                <Caret $ml={2} />
                <Combo $ml={7} $w={56}>自定义线</Combo>
                <Caret $ml={5} />
                <Combo $ml={4} $w={58} $mono>ZDYX-1</Combo>
                <Caret $ml={3} />
                <Sep $ml={7} />
                <T i="prop" l="属性" ml={6} />
                <T i="edit" l="编辑钢筋" ml={4} active gap={2} />
                <T i="list" l="构件列表" ml={5} />
                <T i="pick" l="拾取构件" ml={9} gap={3} />
                <Grip $ml={10} />
                <T i="twoPt" l="两点" ml={4} />
                <T i="parallel" l="平行" ml={6} />
                <T i="angle" l="点角" ml={8} />
                <Caret $ml={7} />
                <More $ml={84}>»</More>
              </ToolGroup>
            </ToolRow>
            <ToolRow $h={26}>
              <ToolGroup $w={488}>
                <Grip />
                <T i="cursor" l="选择" ml={2} active gap={3} />
                <Caret $ml={4} />
                <Sep $ml={7} />
                <T i="line" l="直线" ml={6} gap={2} />
                <T i="ptLen" l="点加长度" ml={9} gap={3} />
                <T i="arc" l="三点画弧" ml={7} gap={3} />
                <Caret $ml={11} />
                <Combo $ml={1} $w={42} />
                <Caret $ml={5} />
                <T i="rect" l="矩形" ml={10} />
                <Sep $ml={4} />
                <T i="smart" l="智能布置" ml={5} />
                <Caret $ml={3} />
              </ToolGroup>
            </ToolRow>
            <Viewport>
              <FullSvg viewBox="0 0 833 434">
                <Model />
                <Axis />
              </FullSvg>
            </Viewport>
            <ToolRow $h={28}>
              <ToolGroup $w={833}>
                <Grip />
                <T i="ortho" l="正交" ml={5} />
                <T i="snap" l="对象捕捉" ml={5} active />
                <T i="dyn" l="动态输入" ml={1} active />
                <Grip $ml={7} />
                <T i="cross" l="交点" ml={3} />
                <T i="perp" l="垂点" ml={5} active gap={3} />
                <T i="mid" l="中点" ml={2} active gap={3} />
                <T i="vertex" l="顶点" ml={4} />
                <T i="coord" l="坐标" ml={6} />
                <Grip $ml={9} />
                <Combo $ml={4} $w={55}>不偏移</Combo>
                <Caret $ml={-8} />
                <Sep $ml={9} />
                <SmallLabel $ml={2}>X=</SmallLabel>
                <NumInput $ml={2}>0</NumInput>
                <Spin><SpinUp /><SpinDown /></Spin>
                <SmallLabel $ml={2}>mm</SmallLabel>
                <SmallLabel $ml={7}>Y=</SmallLabel>
                <NumInput $ml={2}>0</NumInput>
                <Spin><SpinUp /><SpinDown /></Spin>
                <SmallLabel $ml={2}>mm</SmallLabel>
                <Sep $ml={4} />
                <CheckBox $ml={3} />
                <ToolItem $ml={7}>旋转</ToolItem>
                <More $ml={44}>»</More>
              </ToolGroup>
            </ToolRow>
            <BottomPane>
              <PaneGrip>
                <CloseDot />
                <GripLine />
              </PaneGrip>
              <PaneMain>
                <PaneBar>
                  <T i="first" ml={0} />
                  <T i="prev" ml={12} />
                  <T i="next" ml={6} />
                  <T i="last" ml={9} />
                  <Sep $ml={5} />
                  <T i="up" ml={6} />
                  <T i="down" ml={6} />
                  <Sep $ml={7} />
                  <T i="insert" l="插入" ml={4} dim gap={5} />
                  <T i="del" l="删除" ml={7} dim gap={5} />
                  <T i="scale" l="缩尺配筋" ml={9} dim gap={2} />
                  <T i="info" l="钢筋信息" ml={7} />
                  <T i="lib" l="钢筋图库" ml={7} />
                  <T i="other" l="其他" ml={6} />
                  <Caret $ml={3} />
                  <ToolItem $ml={9}>关闭</ToolItem>
                  <Sep $ml={9} />
                  <WeightText $ml={8}>单构件钢筋总重<WeightNum>(kg)</WeightNum>：<WeightNum>143.726</WeightNum></WeightText>
                </PaneBar>
                <TableFrame>
                  <TableClip>
                    <Grid>
                      <colgroup>{colWidths.map((w, i) => <col key={i} width={w} />)}</colgroup>
                      <thead>
                        <tr>
                          {headers.map((h, i) => (
                            <Th key={i} $hot={i === 2}>
                              {h}
                              {i === 2 && <ThKey>(mm)</ThKey>}
                              {i === 8 && <ThKey>(mm</ThKey>}
                            </Th>
                          ))}
                        </tr>
                      </thead>
                      <tbody>
                        <tr>
                          <RowHead $hot>1*</RowHead>
                          <Td $mono>横向钢筋.1</Td>
                          <Td $sel $rule>8</Td>
                          <Td $center>Φ</Td>
                          <Td>0</Td>
                          <ShapeCell>
                            <ShapeSvg viewBox="0 0 201 60">
                              <path d="M92 5V28M92 28L91 58" stroke="#111" strokeWidth="2" />
                              <Txt x={95} y={29} t="502" />
                              <Vert x={107} y={53} t="204" />
                              <Vert x={106} y={47} t="363" fill="#444" size={11} />
                            </ShapeSvg>
                          </ShapeCell>
                          <Td>776</Td>
                          <Td>净长</Td>
                          <Td>776</Td>
                        </tr>
                        <tr>
                          <RowHead>2</RowHead>
                          <Td $mono>横向钢筋.2</Td>
                          <Td $rule>8</Td>
                          <Td $center>Φ</Td>
                          <Td>0</Td>
                          <ShapeCell>
                            <ShapeSvg viewBox="0 0 201 60">
                              <path d="M79 58V46L98 26 100 20" stroke="#111" strokeWidth="2" fill="none" />
                              <Vert x={94} y={25} t="291" />
                              <Txt x={109} y={24} t="1416" />
                              <Txt x={99} y={31} t="107" fill="#4e7a60" />
                              <Txt x={76} y={38} t="540" />
                            </ShapeSvg>
                          </ShapeCell>
                          <Td>2373</Td>
                          <Td>净长</Td>
                          <Td>2373</Td>
                        </tr>
                        <tr>
                          <RowHead />
                          <Td />
                          <Td $rule />
                          <Td />
                          <Td />
                          <ShapeCell>
                            <ShapeSvg viewBox="0 0 201 60">
                              <path d="M88 12H108" stroke="#111" strokeWidth="2" />
                              <Vert x={81} y={17} t="30" />
                              <Txt x={118} y={15} t="181" />
                            </ShapeSvg>
                          </ShapeCell>
                          <Td />
                          <Td />
                          <Td />
                        </tr>
                      </tbody>
                    </Grid>
                  </TableClip>
                  <VScroll>
                    <ScrollBtn><svg width="9" height="6"><path d="M1 5l3.5-4L8 5" stroke="#3a5a9a" strokeWidth="1.6" fill="none" /></svg></ScrollBtn>
                    <ScrollThumb />
                    <ScrollFill />
                    <ScrollBtn><svg width="9" height="6"><path d="M1 1l3.5 4L8 1" stroke="#3a5a9a" strokeWidth="1.6" fill="none" /></svg></ScrollBtn>
                  </VScroll>
                </TableFrame>
                <HScroll>
                  <HBtn />
                  <HThumb />
                  <HBtn $ml={483} />
                </HScroll>
              </PaneMain>
            </BottomPane>
          </MainColumn>
        </Body>
      </AppWindow>
      <Browser>
        <BrowserTop>
          <svg width="8" height="12"><path d="M1 1l5 5-5 5" stroke="#999" strokeWidth="1.3" fill="none" /></svg>
          <span>文件</span>
        </BrowserTop>
        <Address>
          <AddressHost>wxgx.com</AddressHost><AddressPath>/question/gimq/detail/13717896</AddressPath>
        </Address>
        <Bookmarks>
          <BookText $ml={-10}>品</BookText>
          <BookMore $ml={16}>»</BookMore>
          <BookDots $ml={68} />
          <ToolItem $ml={13} $gap={0}><Ico n="ext" size={18} /><span>扩展</span></ToolItem>
          <TabCaret $ml={10} />
          <ToolItem $ml={11} $gap={3}><Ico n="shield" /><span>网银</span></ToolItem>
          <TabCaret $ml={10} />
        </Bookmarks>
        <Tabs>
          <TabEnd>×</TabEnd>
          <Tab $w={212}>
            <Ico n="tabIco" />
            <TabLabel>专业造价问题答疑平台-广联达</TabLabel>
            <TabClose>×</TabClose>
          </Tab>
          <Tab $w={40} $on><Ico n="tabIco" /></Tab>
        </Tabs>
        <Strip />
        <Content>
          <QuestionHead>
            <QuestionTitle>着怎么画的</QuestionTitle>
            <Ico n="clock" />
            <Countdown>距离问题结束时间:</Countdown>
            <CountdownValue>6天23小时</CountdownValue>
          </QuestionHead>
          <QuestionBody>的，钢筋又怎么算</QuestionBody>
        </Content>
        <Drawing><Cad /></Drawing>
      </Browser>
      <Overlay viewBox="0 0 1129 801">
        <Arrow x1={422} y1={127} x2={495} y2={331} />
        <Arrow x1={743} y1={72} x2={569} y2={268} />
        <Arrow x1={802} y1={322} x2={747} y2={72} />
        <Arrow x1={498} y1={333} x2={422} y2={632} />
      </Overlay>
    </Page>
  );
}
